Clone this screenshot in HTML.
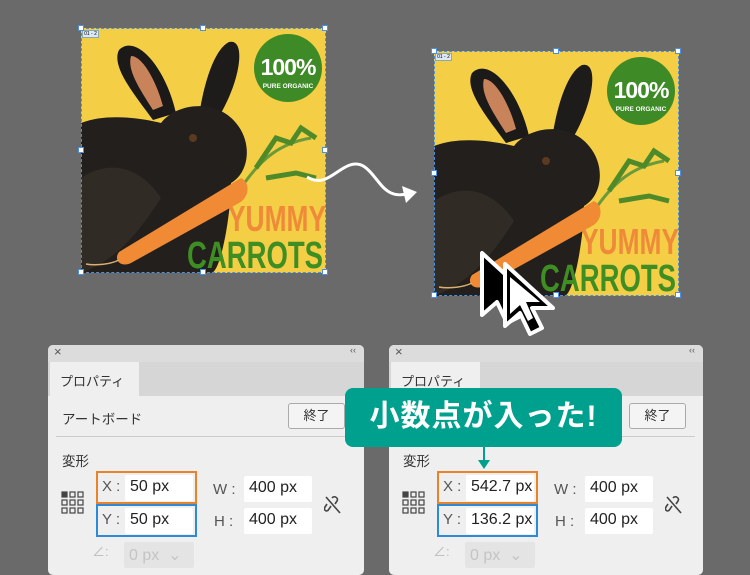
<!DOCTYPE html><html><head><meta charset="utf-8"><style>
*{margin:0;padding:0;box-sizing:border-box}
body{width:750px;height:563px;background:#6a6a6a;position:relative;overflow:hidden;font-family:"Liberation Sans","Noto Sans CJK JP",sans-serif}
.ab{position:absolute;width:245px;height:245px}
.sel{position:absolute;border:1px dashed #4a8fe0}
.h{position:absolute;width:6px;height:6px;background:#fff;border:1px solid #4a8fe0}
.panel{position:absolute;top:345px;width:316px;height:230px;background:#efefef;border-radius:5px;overflow:hidden}
.hdr{height:17px;background:#dcdcdc;position:relative;color:#555;font-size:13px}
.tabs{height:34px;background:#d6d6d6;position:relative}
.tab{position:absolute;left:2px;top:0;width:89px;height:34px;background:#efefef;font-size:13px;color:#333;padding:9px 0 0 10px}
.t{position:absolute;font-size:13.5px;color:#333}
.btn{position:absolute;width:57px;height:26px;border:1px solid #aaa;border-radius:3px;background:#f4f4f4;font-size:13px;text-align:center;line-height:24px;color:#333}
.inp{position:absolute;background:#fff;border-radius:2px;font-size:16px;color:#222;padding:3px 0 0 5px;height:26px;white-space:nowrap;overflow:hidden}
.lbl{position:absolute;font-size:15px;color:#555}
</style></head><body>

<svg width="0" height="0" style="position:absolute"><defs>
<g id="art">
<rect width="245" height="245" fill="#f4cf45"/>
<circle cx="207" cy="40" r="34" fill="#3e8a26"/>
<text x="207" y="47" font-family="Liberation Sans" font-weight="bold" font-size="23" fill="#fff" text-anchor="middle" letter-spacing="-1">100%</text>
<text x="207" y="60" font-family="Liberation Sans" font-weight="bold" font-size="6.5" fill="#fff" text-anchor="middle">PURE ORGANIC</text>
<path d="M38,22 C55,5 85,40 95,85 L72,92 C52,65 30,38 38,22Z" fill="#1c1a18"/>
<path d="M50,28 C62,28 76,55 82,78 L72,82 C58,60 46,42 50,28Z" fill="#c9835a"/>
<path d="M148,14 C165,10 160,50 140,85 L118,88 C122,60 132,22 148,14Z" fill="#1e1c1a"/>
<path d="M0,95 C25,85 60,90 80,95 C95,75 135,70 155,95 C172,115 168,145 150,155 C150,185 140,245 130,245 L0,245Z" fill="#221f1c"/>
<path d="M0,150 C30,130 60,140 80,170 C60,200 40,230 0,245Z" fill="#3a332c" opacity=".6"/>
<circle cx="112" cy="110" r="4" fill="#5a3a20"/>
<path d="M160,160 C180,130 200,115 230,110" stroke="#6a9a3a" stroke-width="3" fill="none"/>
<path d="M175,140 l20,-30 l15,5 l10,-15 l15,10 M185,150 l30,-5 l20,5" stroke="#4f8a2a" stroke-width="5" fill="none"/>
<path d="M160,150 C170,155 168,170 158,175 L50,235 C40,240 32,232 38,224Z" fill="#f08a35"/>
<path d="M38,232 C30,236 15,238 5,236" stroke="#d9b070" stroke-width="1.5" fill="none"/>
<text x="245" y="203" font-family="Liberation Sans" font-weight="bold" font-size="36" fill="#ef8a3a" text-anchor="end" textLength="98" lengthAdjust="spacingAndGlyphs">YUMMY</text>
<text x="242" y="240" font-family="Liberation Sans" font-weight="bold" font-size="38" fill="#3f8e23" text-anchor="end" textLength="136" lengthAdjust="spacingAndGlyphs">CARROTS</text>
</g></defs></svg>

<svg class="ab" style="left:81px;top:28px" viewBox="0 0 245 245"><use href="#art"/></svg>
<div class="sel" style="left:81px;top:28px;width:245px;height:245px"></div>
<div style="position:absolute;left:82px;top:30px;width:17px;height:8px;background:#dce8f8;border:1px solid #8aa;font-size:5px;line-height:6px;text-align:center">01 - 2</div>
<div class="h" style="left:78px;top:25px"></div><div class="h" style="left:200px;top:25px"></div><div class="h" style="left:322px;top:25px"></div>
<div class="h" style="left:78px;top:147px"></div><div class="h" style="left:322px;top:147px"></div>
<div class="h" style="left:78px;top:269px"></div><div class="h" style="left:200px;top:269px"></div><div class="h" style="left:322px;top:269px"></div>

<svg class="ab" style="left:434px;top:51px" viewBox="0 0 245 245"><use href="#art"/></svg>
<div class="sel" style="left:434px;top:51px;width:245px;height:245px"></div>
<div style="position:absolute;left:435px;top:53px;width:17px;height:8px;background:#dce8f8;border:1px solid #8aa;font-size:5px;line-height:6px;text-align:center">01 - 2</div>
<div class="h" style="left:431px;top:48px"></div><div class="h" style="left:553px;top:48px"></div><div class="h" style="left:675px;top:48px"></div>
<div class="h" style="left:431px;top:170px"></div><div class="h" style="left:675px;top:170px"></div>
<div class="h" style="left:431px;top:292px"></div><div class="h" style="left:553px;top:292px"></div><div class="h" style="left:675px;top:292px"></div>

<svg style="position:absolute;left:0;top:0" width="750" height="563">
<path d="M307,177 C325,188 335,170 350,165 C365,160 372,175 382,186 C390,195 398,196 406,194" stroke="#fff" stroke-width="3" fill="none"/>
<path d="M417,192 L402,186 L406,203Z" fill="#fff"/>
<path d="M482,253 L482,315 L497,302 L507,323 L519,317 L509,297 L530,297Z" fill="#000" stroke="#fff" stroke-width="4" stroke-linejoin="round"/>
<path d="M505,264 L505,326 L520,313 L530,334 L542,328 L532,308 L553,308Z" fill="#000" stroke="#fff" stroke-width="4" stroke-linejoin="round"/>
<path d="M510,277 L510,314 L520,305 L528,321 L533,318 L526,302 L540,302Z" fill="#fff"/>
</svg>

<div class="panel" style="left:48px">
<div class="hdr"><span style="position:absolute;left:6px;top:-1px">×</span><span style="position:absolute;right:8px;top:0;font-size:9px">‹‹</span></div>
<div class="tabs"><div class="tab">プロパティ</div></div>
<div class="t" style="left:14px;top:63px">アートボード</div>
<div class="btn" style="left:240px;top:58px">終了</div>
<div style="position:absolute;left:8px;right:8px;top:91px;height:1px;background:#ccc"></div>
<div class="t" style="left:14px;top:105px">変形</div>
<div style="position:absolute;left:48px;top:126px;width:101px;height:33px;border:2px solid #e8832a"></div>
<div style="position:absolute;left:48px;top:159px;width:101px;height:33px;border:2px solid #2d8ad8"></div>
<div class="lbl" style="left:54px;top:133px">X :</div><div class="inp" style="left:77px;top:130px;width:68px">50 px</div>
<div class="lbl" style="left:54px;top:166px">Y :</div><div class="inp" style="left:77px;top:163px;width:68px">50 px</div>
<div class="lbl" style="left:165px;top:136px">W :</div><div class="inp" style="left:196px;top:131px;width:68px">400 px</div>
<div class="lbl" style="left:166px;top:168px">H :</div><div class="inp" style="left:196px;top:163px;width:68px">400 px</div>
<svg style="position:absolute;left:13px;top:146px" width="26" height="24"><g fill="none" stroke="#444" stroke-width="1.2"><rect x="1" y="1" width="5" height="5" fill="#444"/><rect x="9" y="1" width="5" height="5"/><rect x="17" y="1" width="5" height="5"/><rect x="1" y="9" width="5" height="5"/><rect x="9" y="9" width="5" height="5"/><rect x="17" y="9" width="5" height="5"/><rect x="1" y="17" width="5" height="5"/><rect x="9" y="17" width="5" height="5"/><rect x="17" y="17" width="5" height="5"/></g></svg>
<svg style="position:absolute;left:276px;top:150px" width="18" height="20"><path d="M8,3 C10,0 15,3 13,6 L11,9 M7,11 L5,14 C3,18 -1,15 1,12 L3,9 M2,2 L16,18" stroke="#444" stroke-width="1.6" fill="none"/></svg>
<div class="lbl" style="left:44px;top:196px;color:#bbb;font-size:13px">∠:</div>
<div class="inp" style="left:76px;top:197px;width:70px;background:#e4e4e4;color:#c4c4c4">0 px &nbsp;⌄</div>
</div>

<div class="panel" style="left:389px;width:314px">
<div class="hdr"><span style="position:absolute;left:6px;top:-1px">×</span><span style="position:absolute;right:8px;top:0;font-size:9px">‹‹</span></div>
<div class="tabs"><div class="tab">プロパティ</div></div>
<div class="btn" style="left:240px;top:58px">終了</div>
<div style="position:absolute;left:8px;right:8px;top:91px;height:1px;background:#ccc"></div>
<div class="t" style="left:14px;top:105px">変形</div>
<div style="position:absolute;left:48px;top:126px;width:101px;height:33px;border:2px solid #e8832a"></div>
<div style="position:absolute;left:48px;top:159px;width:101px;height:33px;border:2px solid #2d8ad8"></div>
<div class="lbl" style="left:54px;top:133px">X :</div><div class="inp" style="left:77px;top:130px;width:68px">542.7 px</div>
<div class="lbl" style="left:54px;top:166px">Y :</div><div class="inp" style="left:77px;top:163px;width:68px">136.2 px</div>
<div class="lbl" style="left:165px;top:136px">W :</div><div class="inp" style="left:196px;top:131px;width:68px">400 px</div>
<div class="lbl" style="left:166px;top:168px">H :</div><div class="inp" style="left:196px;top:163px;width:68px">400 px</div>
<svg style="position:absolute;left:13px;top:146px" width="26" height="24"><g fill="none" stroke="#444" stroke-width="1.2"><rect x="1" y="1" width="5" height="5" fill="#444"/><rect x="9" y="1" width="5" height="5"/><rect x="17" y="1" width="5" height="5"/><rect x="1" y="9" width="5" height="5"/><rect x="9" y="9" width="5" height="5"/><rect x="17" y="9" width="5" height="5"/><rect x="1" y="17" width="5" height="5"/><rect x="9" y="17" width="5" height="5"/><rect x="17" y="17" width="5" height="5"/></g></svg>
<svg style="position:absolute;left:276px;top:150px" width="18" height="20"><path d="M8,3 C10,0 15,3 13,6 L11,9 M7,11 L5,14 C3,18 -1,15 1,12 L3,9 M2,2 L16,18" stroke="#444" stroke-width="1.6" fill="none"/></svg>
<div class="lbl" style="left:44px;top:196px;color:#bbb;font-size:13px">∠:</div>
<div class="inp" style="left:76px;top:197px;width:70px;background:#e4e4e4;color:#c4c4c4">0 px &nbsp;⌄</div>
</div>

<div style="position:absolute;left:345px;top:388px;width:277px;height:59px;background:#00a08f;border-radius:8px;color:#fff;font-weight:bold;font-size:30px;line-height:58px;text-align:center;letter-spacing:1px">小数点が入った!</div>
<div style="position:absolute;left:483px;top:447px;width:2px;height:15px;background:#00a08f"></div>
<div style="position:absolute;left:478px;top:460px;width:0;height:0;border-left:6px solid transparent;border-right:6px solid transparent;border-top:9px solid #00a08f"></div>
</body></html>
